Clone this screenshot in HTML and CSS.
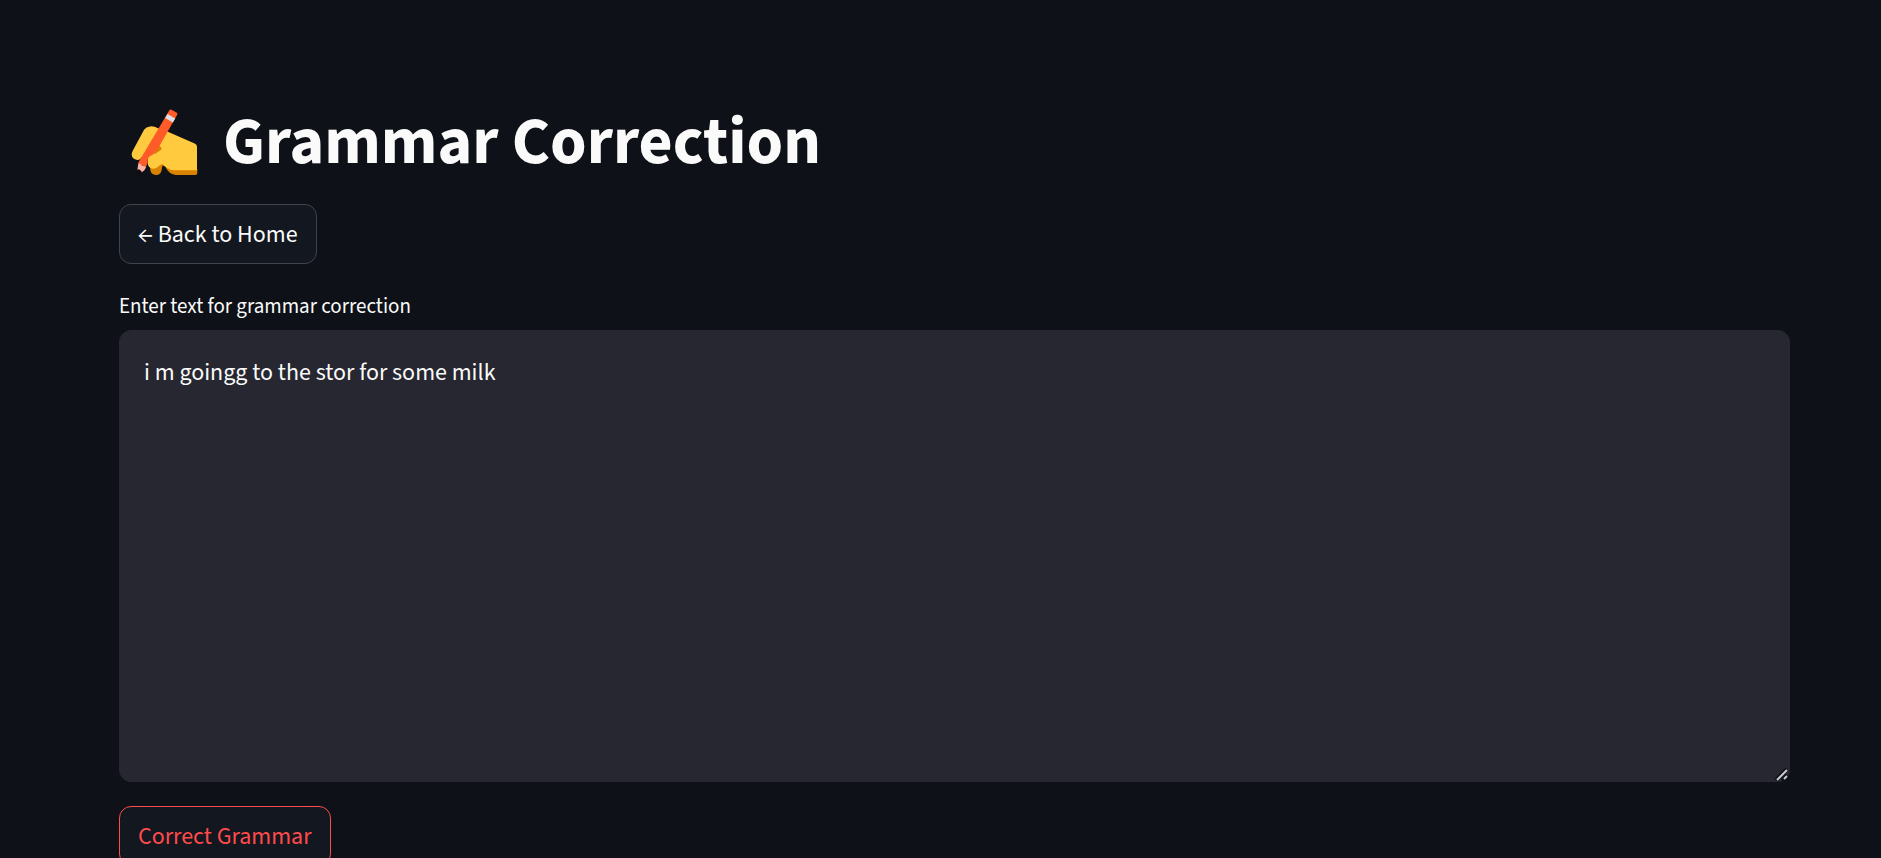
FILE: index.html
```html
<!DOCTYPE html>
<html lang="en">
<head>
<meta charset="utf-8">
<meta name="viewport" content="width=device-width, initial-scale=1">
<title>Grammar Correction</title>
<link rel="stylesheet" href="styles.css">
</head>
<body>
<main class="page">
  <h1 class="title">
    <svg class="title-icon" viewBox="64 38 200 200" aria-hidden="true">
      <path fill="#d98200" d="M120 204L122 222Q126 235 140 235Q152 234 155 222L158 207L166 210Q178 235 198 235H256Q262 235 262 228V218L190 204L150 190Z"/>
      <path fill="#ffca3e" d="M103 100Q109 91 121 90Q134 89 143 95L174 106L254 141Q261 144 261 151V221H192C178 220 167 211 158 202C147 206 141 217 129 216C116 215 111 202 115 189L98 179Q93 190 83 190Q67 188 66 174Q66 169 70 161Z"/>
      <path fill="#d98200" d="M147 148Q157 151 154 160L136 172L128 166Z"/>
      <path fill="#ff5b29" d="M179 41Q181 38 185 40L201 49Q204 51 202 55L146 154Q139 168 128 175Q112 180 114 195L109 211L85 202L88 194Z"/>
      <path fill="#dddfe2" d="M173 53L196 66L189 78L166 65Z"/>
      <path fill="#ffb2a7" d="M86 201Q94 201 98 208Q107 207 109 212L104 221L96 227L83 219Z"/>
      <path fill="#120d0c" d="M84 218Q94 219 96 227L84 235Q81 235 82 230Z"/>
    </svg>
    <span>Grammar Correction</span>
  </h1>
  <button class="button" type="button">← Back to Home</button>
  <label class="label" for="source-text">Enter text for grammar correction</label>
  <div class="field">
    <textarea class="textarea" id="source-text" spellcheck="false">i m goingg to the stor for some milk</textarea>
    <svg class="grip" viewBox="0 0 14 14" aria-hidden="true">
      <path d="M1 12L12 1M7 12L12 7" stroke="#0e1118" stroke-width="4"/>
      <path d="M2 12L12 2M9 11L12 8" stroke="#c8c8ca" stroke-width="2"/>
    </svg>
  </div>
  <button class="button button-active" type="button">Correct Grammar</button>
</main>
</body>
</html>
```
FILE: styles.css
```css
* { box-sizing: border-box; }

body {
  margin: 0;
  height: 100vh;
  overflow: hidden;
  background: #0e1117;
  color: #fafafa;
  font-family: "Source Sans 3", "Noto Sans CJK SC", sans-serif;
  font-size: 24px;
  line-height: 36px;
}

.page {
  display: flex;
  flex-direction: column;
  align-items: flex-start;
  padding: 102px 91px 24px 119px;
}

.title {
  display: flex;
  align-items: center;
  gap: 25px;
  margin: 0 0 22px;
  padding: 0 12px;
  font-size: 66px;
  font-weight: 700;
  line-height: 80px;
}

.title-icon {
  width: 67px;
  height: 67px;
}

.button {
  height: 60px;
  padding: 2px 18px 0;
  border: 1px solid #41444c;
  border-radius: 12px;
  background: #131720;
  color: inherit;
  font: inherit;
}

.button-active {
  border-color: #ff4b4b;
  color: #ff4b4b;
}

.label {
  margin: 24px 0 6px;
  font-size: 21px;
}

.field {
  position: relative;
  width: 100%;
  margin-bottom: 24px;
}

.textarea {
  display: block;
  width: 100%;
  height: 452px;
  padding: 24px;
  border: 1px solid #262730;
  border-radius: 12px;
  outline: none;
  resize: none;
  background: #262730;
  color: inherit;
  font: inherit;
}

.grip {
  position: absolute;
  right: 1px;
  bottom: 0;
  width: 14px;
  height: 14px;
}
```
